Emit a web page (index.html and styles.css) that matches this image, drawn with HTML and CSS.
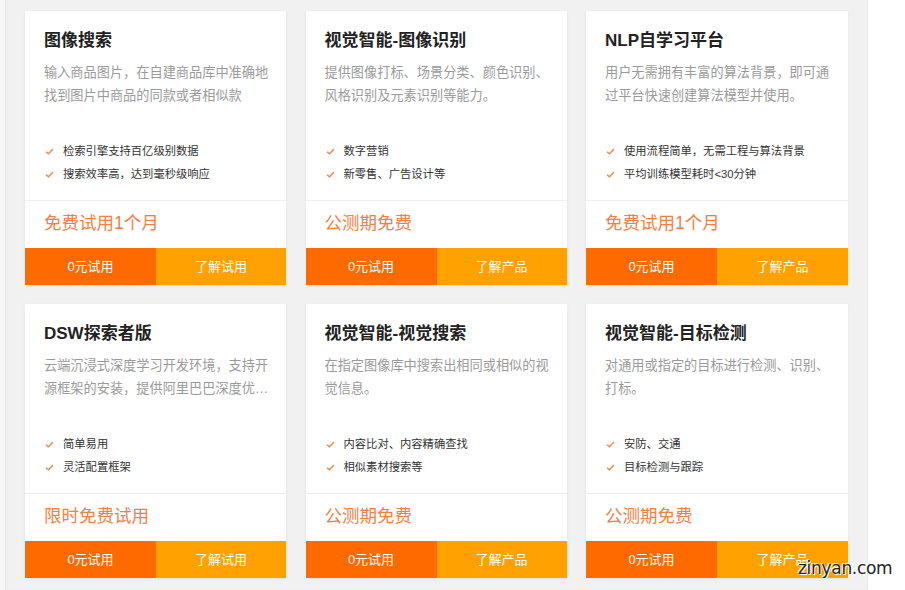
FILE: index.html
```html
<!DOCTYPE html>
<html lang="zh">
<head>
<meta charset="utf-8">
<title>产品试用</title>
<link rel="stylesheet" href="styles.css">
</head>
<body>
<div class="page">
  <div class="edge"></div>
  <main class="panel">
    <div class="grid">
      <section class="card">
        <div class="body">
          <h3 class="title">图像搜索</h3>
          <p class="desc">输入商品图片，在自建商品库中准确地找到图片中商品的同款或者相似款</p>
          <ul class="feats">
            <li><svg class="ck" viewBox="0 0 10 8"><path d="M1 4.2 L3.8 6.6 L9 1.2"/></svg>检索引擎支持百亿级别数据</li>
            <li><svg class="ck" viewBox="0 0 10 8"><path d="M1 4.2 L3.8 6.6 L9 1.2"/></svg>搜索效率高，达到毫秒级响应</li>
          </ul>
        </div>
        <div class="price">免费试用1个月</div>
        <div class="btns"><a class="btn b1">0元试用</a><a class="btn b2">了解试用</a></div>
      </section>
      <section class="card">
        <div class="body">
          <h3 class="title">视觉智能-图像识别</h3>
          <p class="desc">提供图像打标、场景分类、颜色识别、风格识别及元素识别等能力。</p>
          <ul class="feats">
            <li><svg class="ck" viewBox="0 0 10 8"><path d="M1 4.2 L3.8 6.6 L9 1.2"/></svg>数字营销</li>
            <li><svg class="ck" viewBox="0 0 10 8"><path d="M1 4.2 L3.8 6.6 L9 1.2"/></svg>新零售、广告设计等</li>
          </ul>
        </div>
        <div class="price">公测期免费</div>
        <div class="btns"><a class="btn b1">0元试用</a><a class="btn b2">了解产品</a></div>
      </section>
      <section class="card">
        <div class="body">
          <h3 class="title">NLP自学习平台</h3>
          <p class="desc">用户无需拥有丰富的算法背景，即可通过平台快速创建算法模型并使用。</p>
          <ul class="feats">
            <li><svg class="ck" viewBox="0 0 10 8"><path d="M1 4.2 L3.8 6.6 L9 1.2"/></svg>使用流程简单，无需工程与算法背景</li>
            <li><svg class="ck" viewBox="0 0 10 8"><path d="M1 4.2 L3.8 6.6 L9 1.2"/></svg>平均训练模型耗时&lt;30分钟</li>
          </ul>
        </div>
        <div class="price">免费试用1个月</div>
        <div class="btns"><a class="btn b1">0元试用</a><a class="btn b2">了解产品</a></div>
      </section>
      <section class="card">
        <div class="body">
          <h3 class="title">DSW探索者版</h3>
          <p class="desc">云端沉浸式深度学习开发环境，支持开源框架的安装，提供阿里巴巴深度优化的TensorFlow框架</p>
          <ul class="feats">
            <li><svg class="ck" viewBox="0 0 10 8"><path d="M1 4.2 L3.8 6.6 L9 1.2"/></svg>简单易用</li>
            <li><svg class="ck" viewBox="0 0 10 8"><path d="M1 4.2 L3.8 6.6 L9 1.2"/></svg>灵活配置框架</li>
          </ul>
        </div>
        <div class="price">限时免费试用</div>
        <div class="btns"><a class="btn b1">0元试用</a><a class="btn b2">了解试用</a></div>
      </section>
      <section class="card">
        <div class="body">
          <h3 class="title">视觉智能-视觉搜索</h3>
          <p class="desc">在指定图像库中搜索出相同或相似的视觉信息。</p>
          <ul class="feats">
            <li><svg class="ck" viewBox="0 0 10 8"><path d="M1 4.2 L3.8 6.6 L9 1.2"/></svg>内容比对、内容精确查找</li>
            <li><svg class="ck" viewBox="0 0 10 8"><path d="M1 4.2 L3.8 6.6 L9 1.2"/></svg>相似素材搜索等</li>
          </ul>
        </div>
        <div class="price">公测期免费</div>
        <div class="btns"><a class="btn b1">0元试用</a><a class="btn b2">了解产品</a></div>
      </section>
      <section class="card">
        <div class="body">
          <h3 class="title">视觉智能-目标检测</h3>
          <p class="desc">对通用或指定的目标进行检测、识别、打标。</p>
          <ul class="feats">
            <li><svg class="ck" viewBox="0 0 10 8"><path d="M1 4.2 L3.8 6.6 L9 1.2"/></svg>安防、交通</li>
            <li><svg class="ck" viewBox="0 0 10 8"><path d="M1 4.2 L3.8 6.6 L9 1.2"/></svg>目标检测与跟踪</li>
          </ul>
        </div>
        <div class="price">公测期免费</div>
        <div class="btns"><a class="btn b1">0元试用</a><a class="btn b2">了解产品</a></div>
      </section>
    </div>
  </main>
  <div class="rest"></div>
  <div class="watermark">zinyan.com</div>
</div>
</body>
</html>
```

FILE: styles.css
```css
* { box-sizing: border-box; }
html, body { margin: 0; padding: 0; }
body {
  background: #fff;
  font-family: "Liberation Sans", "Noto Sans CJK SC", Arial, sans-serif;
  overflow: hidden;
}
.page {
  position: relative;
  display: flex;
  width: 905px;
  height: 590px;
}
.edge {
  width: 5px;
  background: #f7f7f7;
  flex: none;
}
.panel {
  width: 863px;
  flex: none;
  background: #f1f1f1;
  box-shadow: inset 2px 0 2px -1px #e4e4e4, inset -1px 0 0 #e8e8e8;
  padding: 11px 0 0 20px;
}
.rest {
  flex: 1;
  background: #fff;
}
.grid {
  display: grid;
  grid-template-columns: 261px 261px 262px;
  column-gap: 19.5px;
  row-gap: 19px;
}
.card {
  background: #fff;
  height: 274px;
  display: flex;
  flex-direction: column;
  box-shadow: 0 1px 3px rgba(0, 0, 0, 0.06);
}
.body {
  padding: 17px 16px 0 19px;
  height: 190px;
  border-bottom: 1px solid #eeeeee;
}
.title {
  margin: 0;
  font-size: 17px;
  line-height: 26px;
  font-weight: bold;
  color: #222;
}
.desc {
  margin: 7px 0 0;
  font-size: 13.2px;
  line-height: 23px;
  color: #9a9a9a;
  height: 46px;
  overflow: hidden;
  display: -webkit-box;
  -webkit-line-clamp: 2;
  -webkit-box-orient: vertical;
}
.feats {
  list-style: none;
  margin: 33px 0 0;
  padding: 0;
}
.feats li {
  display: flex;
  align-items: center;
  font-size: 11.3px;
  line-height: 23px;
  color: #333;
}
.ck {
  width: 9px;
  height: 7px;
  margin: 0 9px 0 1px;
  flex: none;
}
.ck path {
  fill: none;
  stroke: #e8894f;
  stroke-width: 1.6;
}
.price {
  height: 47px;
  padding: 9px 19px 0;
  font-size: 17.5px;
  line-height: 26px;
  color: #ef8046;
}
.btns {
  display: flex;
  height: 37px;
}
.btn {
  display: flex;
  align-items: center;
  justify-content: center;
  padding-bottom: 2px;
  font-size: 13px;
  color: #fff;
  text-decoration: none;
}
.b1 {
  width: 131px;
  background: #ff6a00;
}
.b2 {
  flex: 1;
  background: #ffa100;
}
.watermark {
  position: absolute;
  left: 798px;
  top: 558px;
  font-family: "DejaVu Sans", sans-serif;
  font-size: 17px;
  letter-spacing: -0.3px;
  color: #222;
  text-shadow: 0 0 1px #fff, 1px 1px 0 #fff, -1px -1px 0 #fff;
}
```
